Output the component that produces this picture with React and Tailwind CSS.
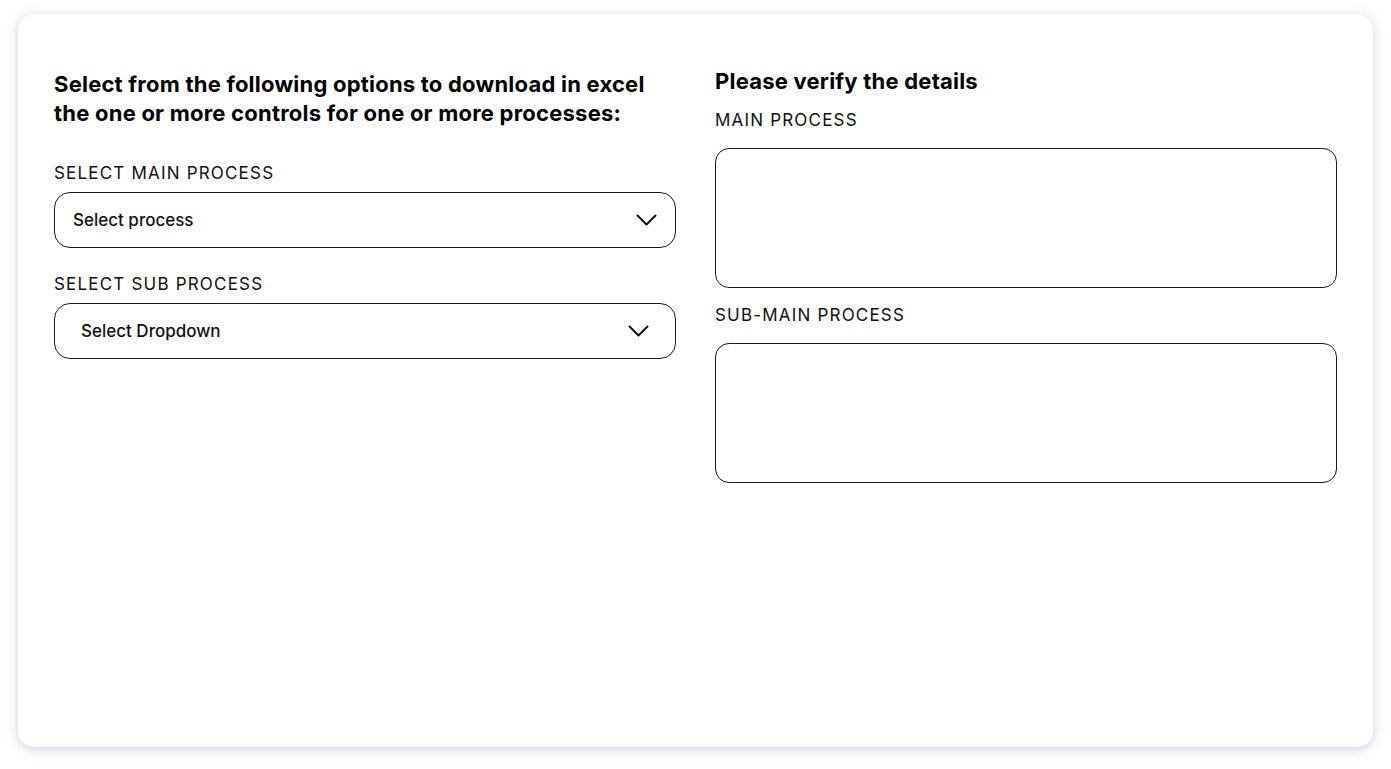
function Label({ children }) {
  return (
    <div className="text-[17px] leading-6 tracking-[0.07em] text-[#111] uppercase">
      {children}
    </div>
  );
}

function Chevron() {
  return (
    <svg width="21" height="13" viewBox="0 0 21 13" fill="none" className="shrink-0">
      <path d="M1.5 1.5 10.5 10.5 19.5 1.5" stroke="#111" strokeWidth="2" strokeLinecap="round" strokeLinejoin="round" />
    </svg>
  );
}

function Dropdown({ placeholder, pad }) {
  return (
    <button
      type="button"
      className={`w-full h-[56px] flex items-center justify-between border border-[#1a1a1a] rounded-[16px] bg-white text-[17px] font-medium text-[#111] ${pad}`}
    >
      <span className="pt-[2px]">{placeholder}</span>
      <Chevron />
    </button>
  );
}

export default function App() {
  return (
    <div className="min-h-screen bg-white p-[18px] pt-[14px] font-['Inter',sans-serif]">
      <div className="h-[733px] bg-white rounded-[16px] shadow-[0_2px_12px_rgba(110,120,160,0.35)] px-[36px] pt-[56px]">
        <div className="grid grid-cols-2 gap-[39px]">
          <div>
            <h1 className="text-[22px] leading-[29px] font-bold tracking-[0.01em] text-black">
              Select from the following options to download in excel the one or more controls for one or more processes:
            </h1>
            <div className="mt-[33px]">
              <Label>Select main process</Label>
              <div className="mt-[7px]">
                <Dropdown placeholder="Select process" pad="pl-[18px] pr-[18px]" />
              </div>
            </div>
            <div className="mt-[24px]">
              <Label>Select sub process</Label>
              <div className="mt-[7px]">
                <Dropdown placeholder="Select Dropdown" pad="pl-[26px] pr-[26px]" />
              </div>
            </div>
          </div>
          <div className="-mt-[3px]">
            <h2 className="text-[22px] leading-[29px] font-bold tracking-[0.01em] text-black">Please verify the details</h2>
            <div className="mt-[12px]">
              <Label>Main process</Label>
              <div className="mt-[16px] h-[140px] border border-[#1a1a1a] rounded-[14px]" />
            </div>
            <div className="mt-[15px]">
              <Label>Sub-main process</Label>
              <div className="mt-[16px] h-[140px] border border-[#1a1a1a] rounded-[14px]" />
            </div>
          </div>
        </div>
      </div>
    </div>
  );
}
